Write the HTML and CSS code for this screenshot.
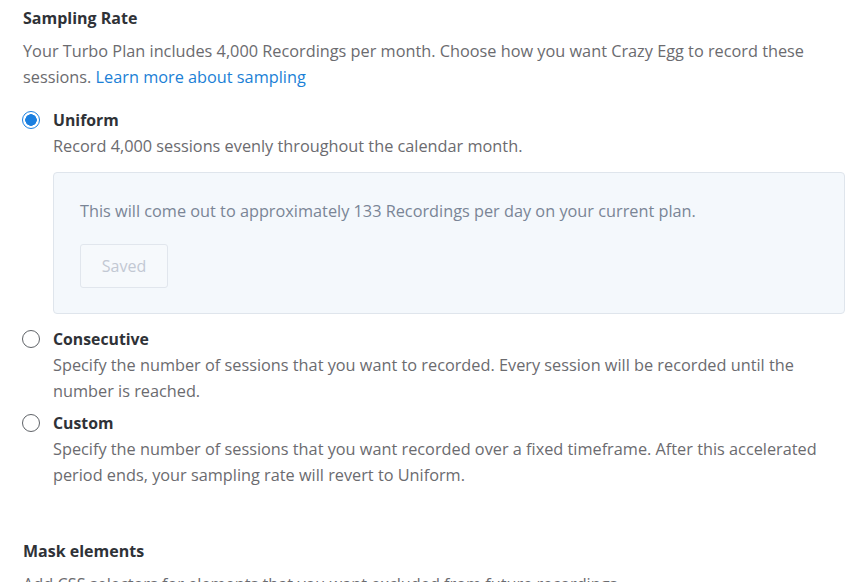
FILE: index.html
```html
<!DOCTYPE html>
<html>
<head>
<meta charset="utf-8">
<link rel="stylesheet" href="styles.css">
</head>
<body>
<div class="page">
  <h3 class="title">Sampling Rate</h3>
  <p class="intro">Your Turbo Plan includes 4,000 Recordings per month. Choose how you want Crazy Egg to record these sessions. <a class="link" href="#">Learn more about sampling</a></p>

  <div class="options">
    <div class="option">
      <span class="radio checked"></span>
      <div class="option-body">
        <div class="label">Uniform</div>
        <div class="desc">Record 4,000 sessions evenly throughout the calendar month.</div>
        <div class="info">
          <p class="info-text">This will come out to approximately 133 Recordings per day on your current plan.</p>
          <button class="btn" disabled>Saved</button>
        </div>
      </div>
    </div>
    <div class="option">
      <span class="radio"></span>
      <div class="option-body">
        <div class="label">Consecutive</div>
        <div class="desc">Specify the number of sessions that you want to recorded. Every session will be recorded until the number is reached.</div>
      </div>
    </div>
    <div class="option">
      <span class="radio"></span>
      <div class="option-body">
        <div class="label">Custom</div>
        <div class="desc">Specify the number of sessions that you want recorded over a fixed timeframe. After this accelerated period ends, your sampling rate will revert to Uniform.</div>
      </div>
    </div>
  </div>

  <h3 class="title mask">Mask elements</h3>
  <p class="intro">Add CSS selectors for elements that you want excluded from future recordings.</p>
</div>
</body>
</html>
```
FILE: styles.css
```css
html, body {
  margin: 0;
  padding: 0;
  background: #ffffff;
}
body {
  font-family: "Open Sans", "Liberation Sans", sans-serif;
  color: #6b6b6f;
}
.page {
  padding: 8px 17px 0 23px;
}
.title {
  margin: 0;
  font-size: 16px;
  line-height: 20px;
  font-weight: 700;
  color: #2f3237;
}
.intro {
  margin: 10px 0 0;
  font-size: 16.3px;
  line-height: 26px;
}
.link {
  color: #1b7fd6;
  text-decoration: none;
}
.options {
  margin-top: 19px;
  display: flex;
  flex-direction: column;
  gap: 8px;
}
.option {
  display: flex;
  gap: 13px;
}
.radio {
  flex: none;
  width: 16px;
  height: 16px;
  border: 1.5px solid #5f6368;
  border-radius: 50%;
  margin-top: 2px;
  margin-left: -1px;
  box-sizing: content-box;
}
.radio.checked {
  border-color: #1a7fe0;
  background: radial-gradient(circle, #1a7fe0 0 5.5px, #ffffff 6px);
}
.option-body {
  flex: 1;
}
.label {
  font-size: 15.8px;
  line-height: 22px;
  font-weight: 700;
  color: #2f3237;
}
.desc {
  margin-top: 2px;
  font-size: 16.3px;
  line-height: 26px;
}
.info {
  margin: 13px 0 6px;
  background: #f4f8fc;
  border: 1px solid #dfe5ec;
  border-radius: 4px;
  padding: 26px 26px 25px;
}
.info-text {
  margin: 0;
  font-size: 16.3px;
  line-height: 24px;
  color: #7a8596;
}
.btn {
  margin-top: 21px;
  font-family: inherit;
  font-size: 16px;
  color: #c2c8d3;
  background: #f6f9fc;
  border: 1px solid #e1e6ed;
  border-radius: 3px;
  width: 88px;
  height: 44px;
  padding: 0;
}
.mask {
  margin-top: 53px;
}
```
